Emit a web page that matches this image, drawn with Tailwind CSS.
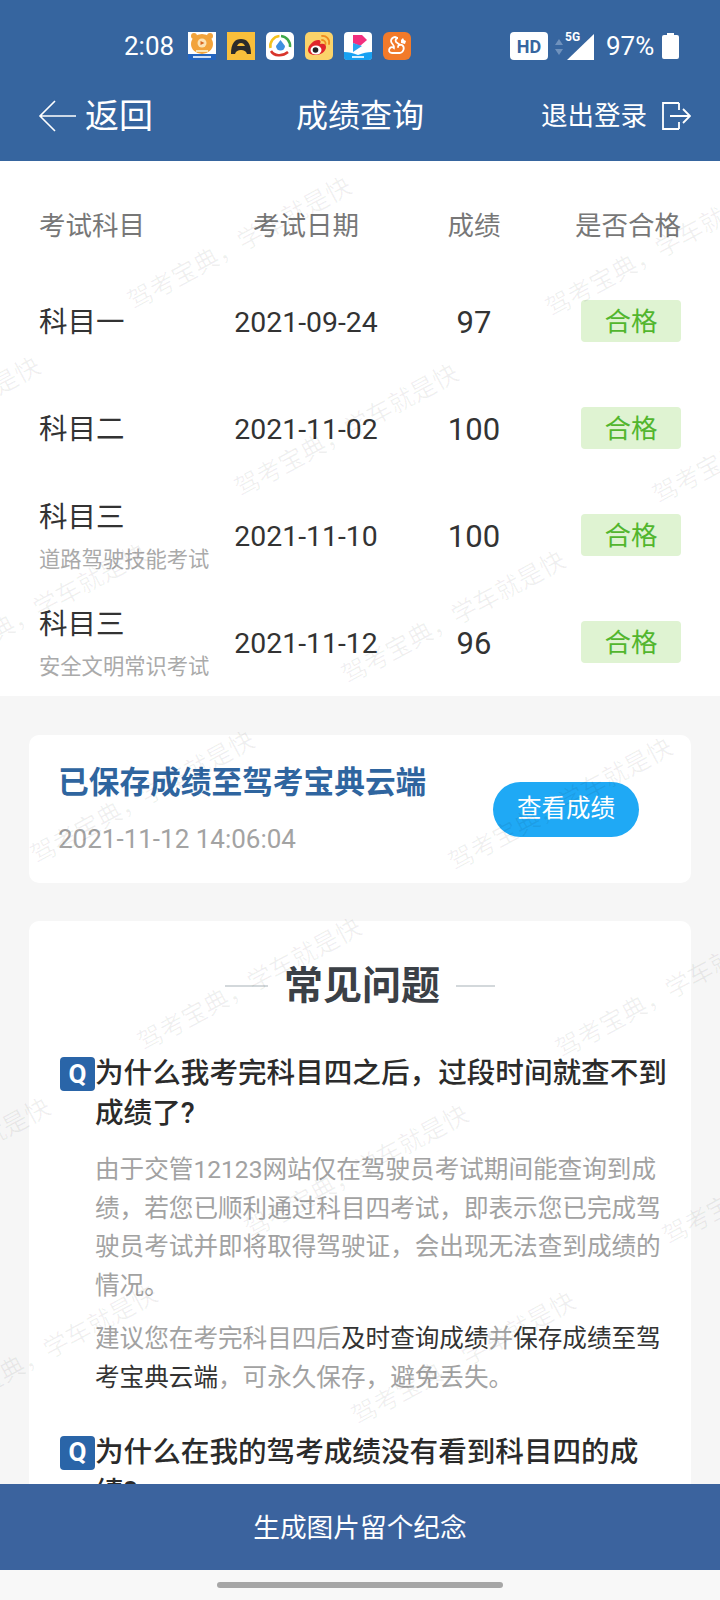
<!doctype html>
<html lang="zh">
<head>
  <meta charset="utf-8">
  <meta name="viewport" content="width=device-width, initial-scale=1">
  <title>成绩查询</title>
  <script src="https://cdn.jsdelivr.net/npm/@tailwindcss/browser@4"></script>
</head>
<body class="bg-white">
<div class="relative flex flex-col w-[720px] h-[1600px] overflow-hidden bg-[#f6f6f6] font-['Roboto','Noto_Sans_CJK_SC',sans-serif]">

  <!-- header -->
  <header class="relative z-20 shrink-0 h-[161px] bg-[#36659f] text-white">
    <div class="relative h-[93px]">
      <div class="absolute left-[124px] top-[32px] flex items-center h-[28px]">
        <span class="text-[26px] w-[64px]">2:08</span>
        <div class="flex gap-[11px]">
          <svg class="w-[28px] h-[28px]" viewBox="0 0 28 28"><rect width="28" height="28" fill="#fff"/><ellipse cx="14" cy="12" rx="11" ry="10" fill="#f2a33a"/><circle cx="6" cy="4" r="3" fill="#f2a33a"/><circle cx="22" cy="4" r="3" fill="#f2a33a"/><circle cx="14" cy="11" r="4.500" fill="#fbe3b4"/><path d="M12.500 9l4 2-4 2z" fill="#d9661f"/><path d="M8 19h12" stroke="#fbe3b4" stroke-width="2"/><rect y="22" width="28" height="6" fill="#2465c0"/><rect x="5" y="24" width="18" height="2" fill="#cfe0f6"/></svg>
          <svg class="w-[28px] h-[28px]" viewBox="0 0 28 28"><rect width="28" height="28" fill="#f9bf3b"/><path d="M4 22c0-11 4-15 10-15s10 4 10 15h-4c-1-3-3-4-6-4s-5 1-6 4z" fill="#2b2b2b"/><path d="M10 14h8c-1-2-2-3-4-3s-3 1-4 3z" fill="#f9bf3b"/></svg>
          <svg class="w-[28px] h-[28px]" viewBox="0 0 28 28"><rect width="28" height="28" rx="5" fill="#fff"/><path d="M4.500 16a10 10 0 0 1 9-12" fill="none" stroke="#f4c21d" stroke-width="2.500"/><path d="M15 4a10 10 0 0 1 9 11" fill="none" stroke="#3ea84a" stroke-width="2.500"/><path d="M5 19c3 5 11 6 17 1" fill="none" stroke="#d8352c" stroke-width="2.500"/><path d="M14.500 8l4.500 6a4.500 4.500 0 1 1-9 0z" fill="#3f8fe0"/></svg>
          <svg class="w-[28px] h-[28px]" viewBox="0 0 28 28"><rect width="28" height="28" rx="5" fill="#fbd36a"/><path d="M3 18c0-5 6-10 10-10 3 0 3 2 2 4 4-1 6 0 6 3 0 5-6 8-10 8-5 0-8-2-8-5z" fill="#e0262b"/><ellipse cx="11" cy="18" rx="5.500" ry="4.500" fill="#fff"/><circle cx="10.500" cy="18" r="2.800" fill="#222"/><path d="M17 4c4-.5 8 3 7 8M17 8c2 0 4 2 3.500 4" fill="none" stroke="#f08a1d" stroke-width="1.800" stroke-linecap="round"/></svg>
          <svg class="w-[28px] h-[28px]" viewBox="0 0 28 28"><rect width="28" height="28" rx="4" fill="#fff"/><path d="M9 3h9l5 5-7 6-7-3z" fill="#f22f7e"/><path d="M9 11l9 3-9 6z" fill="#29a3f0"/><path d="M0 20c5 0 9 1 14 3 5-2 9-3 14-3v5a3 3 0 0 1-3 3H3a3 3 0 0 1-3-3z" fill="#17a1f2"/><rect x="8" y="24" width="12" height="2" fill="#d8f0ff"/></svg>
          <svg class="w-[28px] h-[28px]" viewBox="0 0 28 28"><rect width="28" height="28" rx="6" fill="#f27a2a"/><path d="M17 21c4-1 5-6 2-8-2-1-4 0-4 2M17 21H9c-3 0-4-3-2-5 1-1 3-1 4 0 1-3-3-4-3-7 0-2 2-4 4-4 1 0 2 1 3 1-2 0-3 2-2 4l4 3" fill="none" stroke="#fff" stroke-width="1.800" stroke-linecap="round"/><path d="M18 8l2-2 1 2 2 1-1 3-4-1z" fill="#fff"/></svg>
        </div>
      </div>
      <div class="absolute left-[510px] top-[32px] w-[38px] h-[28px] rounded-[4px] bg-white text-[#36659f] text-[18px] font-bold flex items-center justify-center">HD</div>
      <svg class="absolute left-[554px] top-[38px] w-[10px] h-[18px]" viewBox="0 0 10 18"><path d="M5 1l4 6H1zM5 17l4-6H1z" fill="#6f92bd"/></svg>
      <svg class="absolute left-[567px] top-[34px] w-[27px] h-[26px]" viewBox="0 0 27 26"><path d="M27 0v26H0z" fill="#fff"/></svg>
      <span class="absolute left-[565px] top-[29px] text-[12px] font-bold leading-[16px]">5G</span>
      <span class="absolute left-[606px] top-[31px] text-[26px] leading-[30px]">97%</span>
      <svg class="absolute left-[662px] top-[33px] w-[17px] h-[26px]" viewBox="0 0 17 26"><path d="M5 0h7v2h3a2 2 0 0 1 2 2v20a2 2 0 0 1-2 2H2a2 2 0 0 1-2-2V4a2 2 0 0 1 2-2h3z" fill="#fff"/></svg>
    </div>
    <div class="relative flex items-center justify-between h-[46px] pl-[38px] pr-[29px]">
      <div class="flex items-center gap-[9px]">
        <svg class="w-[38px] h-[34px]" viewBox="0 0 38 34"><path d="M38 17H2M17 2L2 17l15 15" fill="none" stroke="#fff" stroke-width="1.600"/></svg>
        <span class="text-[34px] leading-[46px]">返回</span>
      </div>
      <span class="absolute left-[296px] text-[32px] leading-[46px]">成绩查询</span>
      <div class="flex items-center gap-[14px]">
        <span class="text-[26.500px] leading-[46px]">退出登录</span>
        <svg class="w-[30px] h-[30px]" viewBox="0 0 30 30"><path d="M18 2H2v26h16M18 2v7M18 28v-7M9 15h20M22 8l7 7-7 7" fill="none" stroke="#fff" stroke-width="1.800"/></svg>
      </div>
    </div>
  </header>

  <main class="relative flex-1 overflow-hidden">
    <!-- score table -->
    <section class="h-[535px] overflow-hidden bg-white px-[39px] text-[#333]">
      <div class="grid grid-cols-[190px_154px_182px_116px] items-center h-[107px] pt-[22px] text-[26.500px] text-[#777]">
        <span class="whitespace-nowrap">考试科目</span>
        <span class="text-center whitespace-nowrap">考试日期</span>
        <span class="text-center">成绩</span>
        <span class="text-right whitespace-nowrap">是否合格</span>
      </div>
      <div class="grid grid-cols-[190px_154px_182px_116px] items-center h-[107px]">
        <span class="pt-[4px] text-[28.500px]">科目一</span>
        <span class="pt-[4px] text-center text-[28.400px]">2021-09-24</span>
        <span class="pt-[4px] text-center text-[31px]">97</span>
        <span class="justify-self-end flex items-center justify-center w-[100px] h-[42px] -mt-[2px] pt-[3px] rounded-[4px] bg-[#dff3d2] text-[#52b62e] text-[26.500px]">合格</span>
      </div>
      <div class="grid grid-cols-[190px_154px_182px_116px] items-center h-[107px]">
        <span class="pt-[4px] text-[28.500px]">科目二</span>
        <span class="pt-[4px] text-center text-[28.400px]">2021-11-02</span>
        <span class="pt-[4px] text-center text-[31px]">100</span>
        <span class="justify-self-end flex items-center justify-center w-[100px] h-[42px] -mt-[2px] pt-[3px] rounded-[4px] bg-[#dff3d2] text-[#52b62e] text-[26.500px]">合格</span>
      </div>
      <div class="grid grid-cols-[190px_154px_182px_116px] items-center h-[107px]">
        <div class="flex flex-col pt-[4px]">
          <span class="text-[28.500px] leading-[40px]">科目三</span>
          <span class="text-[21.300px] leading-[34px] text-[#aaa] mt-[5px] whitespace-nowrap">道路驾驶技能考试</span>
        </div>
        <span class="pt-[4px] text-center text-[28.400px]">2021-11-10</span>
        <span class="pt-[4px] text-center text-[31px]">100</span>
        <span class="justify-self-end flex items-center justify-center w-[100px] h-[42px] -mt-[2px] pt-[3px] rounded-[4px] bg-[#dff3d2] text-[#52b62e] text-[26.500px]">合格</span>
      </div>
      <div class="grid grid-cols-[190px_154px_182px_116px] items-center h-[107px]">
        <div class="flex flex-col pt-[4px]">
          <span class="text-[28.500px] leading-[40px]">科目三</span>
          <span class="text-[21.300px] leading-[34px] text-[#aaa] mt-[5px] whitespace-nowrap">安全文明常识考试</span>
        </div>
        <span class="pt-[4px] text-center text-[28.400px]">2021-11-12</span>
        <span class="pt-[4px] text-center text-[31px]">96</span>
        <span class="justify-self-end flex items-center justify-center w-[100px] h-[42px] -mt-[2px] pt-[3px] rounded-[4px] bg-[#dff3d2] text-[#52b62e] text-[26.500px]">合格</span>
      </div>
    </section>

    <!-- saved to cloud -->
    <section class="flex items-center justify-between h-[148px] mx-[29px] mt-[39px] pl-[29px] pr-[52px] rounded-[10px] bg-white">
      <div>
        <h2 class="text-[30.700px] leading-[40px] font-bold text-[#2f659f] whitespace-nowrap">已保存成绩至驾考宝典云端</h2>
        <p class="mt-[19px] text-[26px] leading-[34px] text-[#a3a3a3]">2021-11-12 14:06:04</p>
      </div>
      <button class="w-[146px] h-[55px] rounded-full bg-[#1fa9f5] text-white text-[24.500px]">查看成绩</button>
    </section>

    <!-- faq -->
    <section class="mx-[29px] mt-[38px] pt-[40px] pl-[31px] pr-[24px] rounded-[10px] bg-white">
      <div class="flex items-center justify-center gap-[16px] pr-[7px]">
        <span class="w-[43px] h-[2px] bg-[#d3d8db]"></span>
        <h2 class="text-[39px] leading-[50px] font-bold text-[#3b4046]">常见问题</h2>
        <span class="w-[39px] h-[2px] bg-[#d3d8db]"></span>
      </div>

      <div class="flex mt-[42px]">
        <span class="shrink-0 flex items-center justify-center w-[35px] h-[34px] mt-[4px] rounded-[4px] bg-[#2a65a8] text-white text-[26px] font-bold">Q</span>
        <h3 class="text-[28.600px] leading-[40px] font-medium text-[#2b2b2b]">为什么我考完科目四之后，过段时间就查不到成绩了?</h3>
      </div>
      <div class="pl-[35px] mt-[18px] text-[24.600px] leading-[38.600px] text-[#a2a2a2]">
        <p>由于交管12123网站仅在驾驶员考试期间能查询到成绩，若您已顺利通过科目四考试，即表示您已完成驾驶员考试并即将取得驾驶证，会出现无法查到成绩的情况。</p>
        <p class="mt-[15px]">建议您在考完科目四后<span class="text-[#333]">及时查询成绩</span>并<span class="text-[#333]">保存成绩至驾考宝典云端</span>，可永久保存，避免丢失。</p>
      </div>

      <div class="flex mt-[34px]">
        <span class="shrink-0 flex items-center justify-center w-[35px] h-[34px] mt-[4px] rounded-[4px] bg-[#2a65a8] text-white text-[26px] font-bold">Q</span>
        <h3 class="text-[28.600px] leading-[40px] font-medium text-[#2b2b2b]">为什么在我的驾考成绩没有看到科目四的成绩?</h3>
      </div>
    </section>

    <!-- watermark tiles -->
    <div id="watermarks" class="absolute inset-0 pointer-events-none overflow-hidden"></div>
  </main>

  <!-- bottom -->
  <div class="relative z-20 shrink-0 flex items-center justify-center h-[86px] pt-[2px] bg-[#3b639e] text-white text-[26.700px]">生成图片留个纪念</div>
  <div class="relative z-20 shrink-0 flex justify-center pt-[12px] h-[30px] bg-[#f8f8f8]">
    <span class="w-[286px] h-[6px] rounded-full bg-[#a6a6a6]"></span>
  </div>
</div>

<script>
  // repeat the watermark on a slanted lattice, positions relative to <main>
  let box = document.getElementById("watermarks");
  for (let i = -2; i < 9; i++) {
    for (let j = -3; j < 4; j++) {
      let x = 137 + i * 107 + j * 418;
      let y = 317 - 161 + i * 187 + j * 7;
      if (x < -220 || x > 710 || y < 0 || y > 1440) continue;
      let el = document.createElement("span");
      el.className = "absolute whitespace-nowrap origin-bottom-left rotate-[-28.500deg] text-[25px] leading-[30px] text-black/[0.06]";
      el.style.left = x + "px";
      el.style.top = (y - 30) + "px";
      el.textContent = "驾考宝典，学车就是快";
      box.appendChild(el);
    }
  }
</script>
</body>
</html>
